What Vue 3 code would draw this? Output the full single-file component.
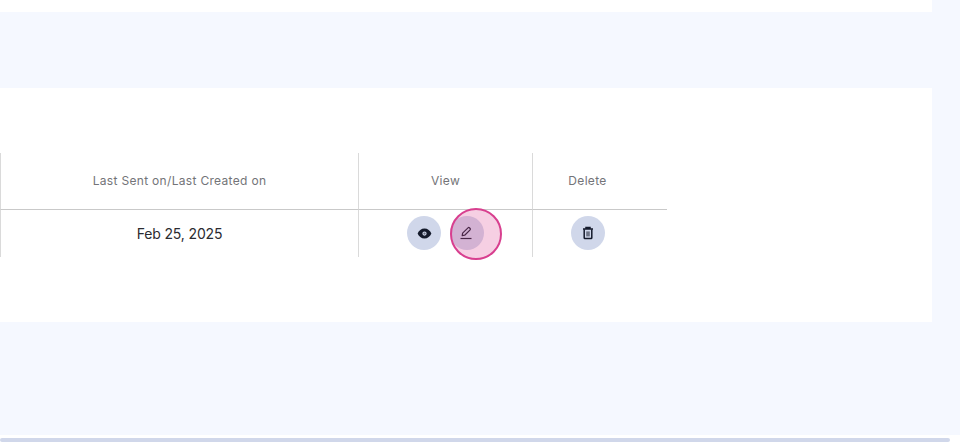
<script setup>
const columns = [
  { key: 'sent', label: 'Last Sent on/Last Created on' },
  { key: 'view', label: 'View' },
  { key: 'delete', label: 'Delete' }
];
</script>

<template>
  <main class="page">
    <div class="content">
      <section class="card card-top"></section>
      <section class="card card-table">
        <div class="table">
          <div v-for="col in columns" :key="col.key" class="th" :class="col.key">{{ col.label }}</div>

          <div class="td date">Feb 25, 2025</div>
          <div class="td view">
            <div class="actions">
              <button class="icon-btn" type="button">
                <svg width="15" height="15" viewBox="0 0 24 24" fill="#141a2b">
                  <path fill-rule="evenodd" d="M12 4C7 4 2.73 7.3 1 12c1.73 4.7 6 8 11 8s9.27-3.3 11-8c-1.73-4.7-6-8-11-8zM12 8.6a3.4 3.4 0 1 0 0 6.8 3.4 3.4 0 0 0 0-6.8z" />
                  <circle cx="12" cy="12" r="1.8" fill="#6d7384" />
                </svg>
              </button>
              <button class="icon-btn edit" type="button">
                <svg class="pencil" width="14" height="16" viewBox="0 0 14 16" fill="none" stroke="#141a2b" stroke-width="1.2">
                  <path d="M3.2 10.6 3.6 8.2 9 2.8a1 1 0 0 1 1.4 0l.7.7a1 1 0 0 1 0 1.4L5.7 10.2z" stroke-linejoin="round" />
                  <path d="M1.5 13.5h11" />
                </svg>
                <span class="spotlight"></span>
              </button>
            </div>
          </div>
          <div class="td delete">
            <button class="icon-btn" type="button">
              <svg width="14" height="14" viewBox="0 0 14 14" fill="none" stroke="#141a2b" stroke-width="1.5">
                <path d="M2 3h10M5 2.6V1.4h4v1.2" />
                <path d="M3.2 3.2v8.6c0 .5.3.8.8.8h6c.5 0 .8-.3.8-.8V3.2" />
                <rect x="5.2" y="5.4" width="3.6" height="5" fill="#6d7384" stroke="none" />
              </svg>
            </button>
          </div>
        </div>
      </section>
    </div>
    <div class="scroll-track"><div class="scroll-thumb"></div></div>
  </main>
</template>

<style scoped>
.page {
  width: 960px;
  height: 445px;
  overflow: hidden;
  background: #f5f8ff;
  display: flex;
  flex-direction: column;
  font-family: Inter, "Liberation Sans", sans-serif;
}

.content {
  flex: 1;
  display: flex;
  flex-direction: column;
  gap: 76px;
}

.card {
  width: 932px;
  background: #fff;
}

.card-top {
  height: 12px;
}

.card-table {
  padding: 65px 0;
}

.table {
  display: grid;
  grid-template-columns: 358px 174px 135px;
  grid-template-rows: 57px 47px;
  width: 667px;
}

.th,
.td {
  display: flex;
  align-items: center;
  justify-content: center;
  border-left: 1px solid #dadada;
}

.th {
  font-size: 12px;
  letter-spacing: 0.32px;
  color: #737478;
  border-bottom: 1px solid #c9c9c9;
  padding-bottom: 1px;
}

.td {
  padding-bottom: 1px;
}

.th.delete,
.td.delete {
  padding-right: 25px;
}

.td.date {
  font-size: 14px;
  letter-spacing: -0.15px;
  color: #2b2b30;
}

.actions {
  display: flex;
  gap: 9px;
}

.icon-btn {
  position: relative;
  width: 34px;
  height: 34px;
  padding: 0;
  border: none;
  border-radius: 50%;
  background: #d0d7ea;
  display: flex;
  align-items: center;
  justify-content: center;
}

.pencil {
  margin-left: -3px;
}

.spotlight {
  position: absolute;
  left: 0;
  top: -8px;
  width: 52px;
  height: 52px;
  box-sizing: border-box;
  border: 2px solid #d83f8f;
  border-radius: 50%;
  background: rgba(222, 76, 150, 0.27);
}

.scroll-track {
  height: 10px;
  box-sizing: border-box;
  padding: 3px 10px 3px 0;
  background: #fff;
}

.scroll-thumb {
  height: 4px;
  border-radius: 2px;
  background: #d0d7ea;
}
</style>

<style>
html,
body {
  margin: 0;
  overflow: hidden;
}
</style>
